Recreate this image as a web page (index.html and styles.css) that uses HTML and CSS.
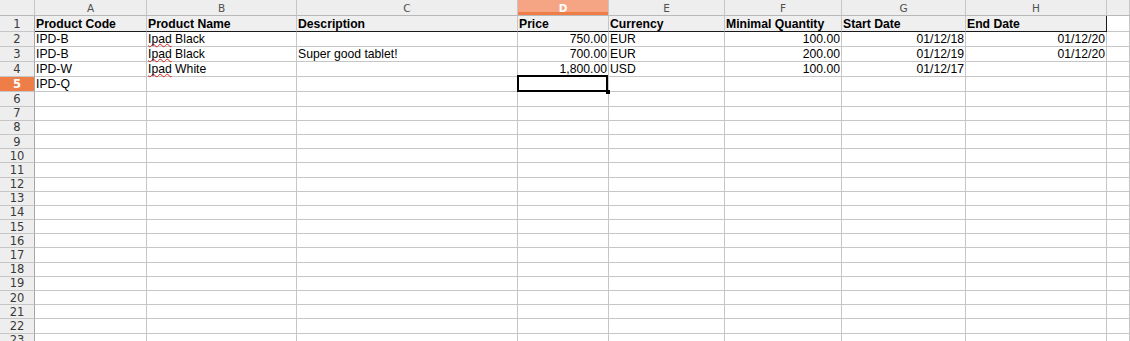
FILE: index.html
```html
<!DOCTYPE html>
<html lang="en">
<head>
<meta charset="utf-8">
<title>Products</title>
<link rel="stylesheet" href="styles.css">
</head>
<body>
<div class="sheet">
  <div class="row colhead">
    <span class="corner"></span>
    <span>A</span><span>B</span><span>C</span><span class="cur">D</span><span>E</span><span>F</span><span>G</span><span>H</span><span></span>
  </div>
  <div class="row r1 title">
    <span class="rh">1</span>
    <span>Product Code</span><span>Product Name</span><span>Description</span><span>Price</span><span>Currency</span><span>Minimal Quantity</span><span>Start Date</span><span class="last">End Date</span><span class="off"></span>
  </div>
  <div class="row r2">
    <span class="rh">2</span>
    <span>IPD-B</span><span class="spell"><u class="typo">Ipad</u>&nbsp;Black</span><span></span><span class="num">750.00</span><span>EUR</span><span class="num">100.00</span><span class="num">01/12/18</span><span class="num">01/12/20</span><span></span>
  </div>
  <div class="row r2">
    <span class="rh">3</span>
    <span>IPD-B</span><span class="spell"><u class="typo">Ipad</u>&nbsp;Black</span><span>Super good tablet!</span><span class="num">700.00</span><span>EUR</span><span class="num">200.00</span><span class="num">01/12/19</span><span class="num">01/12/20</span><span></span>
  </div>
  <div class="row r2">
    <span class="rh">4</span>
    <span>IPD-W</span><span class="spell"><u class="typo">Ipad</u>&nbsp;White</span><span></span><span class="num">1,800.00</span><span>USD</span><span class="num">100.00</span><span class="num">01/12/17</span><span></span><span></span>
  </div>
  <div class="row r2">
    <span class="rh cur">5</span>
    <span>IPD-Q</span><span></span><span></span><span class="active"></span><span></span><span></span><span></span><span></span><span></span>
  </div>
  <div class="row"><span class="rh">6</span><span></span><span></span><span></span><span></span><span></span><span></span><span></span><span></span><span></span></div>
  <div class="row"><span class="rh">7</span><span></span><span></span><span></span><span></span><span></span><span></span><span></span><span></span><span></span></div>
  <div class="row"><span class="rh">8</span><span></span><span></span><span></span><span></span><span></span><span></span><span></span><span></span><span></span></div>
  <div class="row"><span class="rh">9</span><span></span><span></span><span></span><span></span><span></span><span></span><span></span><span></span><span></span></div>
  <div class="row"><span class="rh">10</span><span></span><span></span><span></span><span></span><span></span><span></span><span></span><span></span><span></span></div>
  <div class="row"><span class="rh">11</span><span></span><span></span><span></span><span></span><span></span><span></span><span></span><span></span><span></span></div>
  <div class="row"><span class="rh">12</span><span></span><span></span><span></span><span></span><span></span><span></span><span></span><span></span><span></span></div>
  <div class="row"><span class="rh">13</span><span></span><span></span><span></span><span></span><span></span><span></span><span></span><span></span><span></span></div>
  <div class="row"><span class="rh">14</span><span></span><span></span><span></span><span></span><span></span><span></span><span></span><span></span><span></span></div>
  <div class="row"><span class="rh">15</span><span></span><span></span><span></span><span></span><span></span><span></span><span></span><span></span><span></span></div>
  <div class="row"><span class="rh">16</span><span></span><span></span><span></span><span></span><span></span><span></span><span></span><span></span><span></span></div>
  <div class="row"><span class="rh">17</span><span></span><span></span><span></span><span></span><span></span><span></span><span></span><span></span><span></span></div>
  <div class="row"><span class="rh">18</span><span></span><span></span><span></span><span></span><span></span><span></span><span></span><span></span><span></span></div>
  <div class="row"><span class="rh">19</span><span></span><span></span><span></span><span></span><span></span><span></span><span></span><span></span><span></span></div>
  <div class="row"><span class="rh">20</span><span></span><span></span><span></span><span></span><span></span><span></span><span></span><span></span><span></span></div>
  <div class="row"><span class="rh">21</span><span></span><span></span><span></span><span></span><span></span><span></span><span></span><span></span><span></span></div>
  <div class="row"><span class="rh">22</span><span></span><span></span><span></span><span></span><span></span><span></span><span></span><span></span><span></span></div>
  <div class="row"><span class="rh">23</span><span></span><span></span><span></span><span></span><span></span><span></span><span></span><span></span><span></span></div>
</div>
</body>
</html>
```

FILE: styles.css
```css
html, body {
  margin: 0;
  padding: 0;
  background: #ffffff;
}

body {
  font-family: "Liberation Sans", Arial, sans-serif;
  font-size: 12.2px;
  color: #000;
  overflow: hidden;
}

.sheet {
  display: flex;
  flex-direction: column;
  width: 1130px;
}

/* one spreadsheet row: row header + columns A..I */
.row {
  display: grid;
  grid-template-columns: 35px 112px 150px 221px 91px 116px 117px 124px 141px 1fr;
  height: 14.2px;
  flex: none;
}

.row > span {
  box-sizing: border-box;
  border-right: 1px solid #c6c6c6;
  border-bottom: 1px solid #c6c6c6;
  padding: 0 1px;
  white-space: nowrap;
  overflow: hidden;
  display: flex;
  align-items: flex-end;
  line-height: 14px;
}

.row.r2 {
  height: 15.1px;
}

.row.r1 {
  height: 16px;
}

/* column letters */
.colhead {
  height: 16px;
}

.colhead > span {
  background: #eeeeee;
  color: #505050;
  font-family: "DejaVu Sans", sans-serif;
  font-size: 10.5px;
  justify-content: center;
  align-items: center;
  border-bottom-color: #b8b8b8;
  padding: 0;
}

.colhead > span.cur {
  background: linear-gradient(#f5a584 0, #f5a584 12px, #ef7d47 12px);
  color: #fff;
  font-weight: bold;
}

/* row numbers */
.row > .rh {
  background: #eeeeee;
  color: #3a3a3a;
  font-family: "DejaVu Sans", sans-serif;
  font-size: 11.5px;
  justify-content: center;
  align-items: center;
  border-right-color: #a8a8a8;
  padding: 0;
}

.row > .rh.cur {
  background: #ef7d47;
  color: #fff;
  font-weight: bold;
}

/* heading row of the table */
.title > span:not(.rh):not(.off) {
  background: #efefef;
  font-weight: bold;
  border-bottom-color: #1a1a1a;
}

.title > span.last {
  border-right-color: #1a1a1a;
}

.num {
  justify-content: flex-end;
}

/* cells holding a misspelled word keep the squiggle visible */
.row > .spell {
  overflow: visible;
}

.typo {
  text-decoration: underline wavy #e02020;
  text-decoration-thickness: 1px;
  text-underline-offset: 0;
  text-decoration-skip-ink: none;
}

/* cell cursor */
.row > .active {
  position: relative;
  overflow: visible;
}

.active::after {
  content: "";
  position: absolute;
  top: -2px;
  left: -1px;
  right: 0;
  bottom: -1px;
  border: 2px solid #000;
}

.active::before {
  content: "";
  position: absolute;
  right: -2px;
  bottom: -3px;
  width: 4px;
  height: 4px;
  background: #000;
  z-index: 1;
}
```
